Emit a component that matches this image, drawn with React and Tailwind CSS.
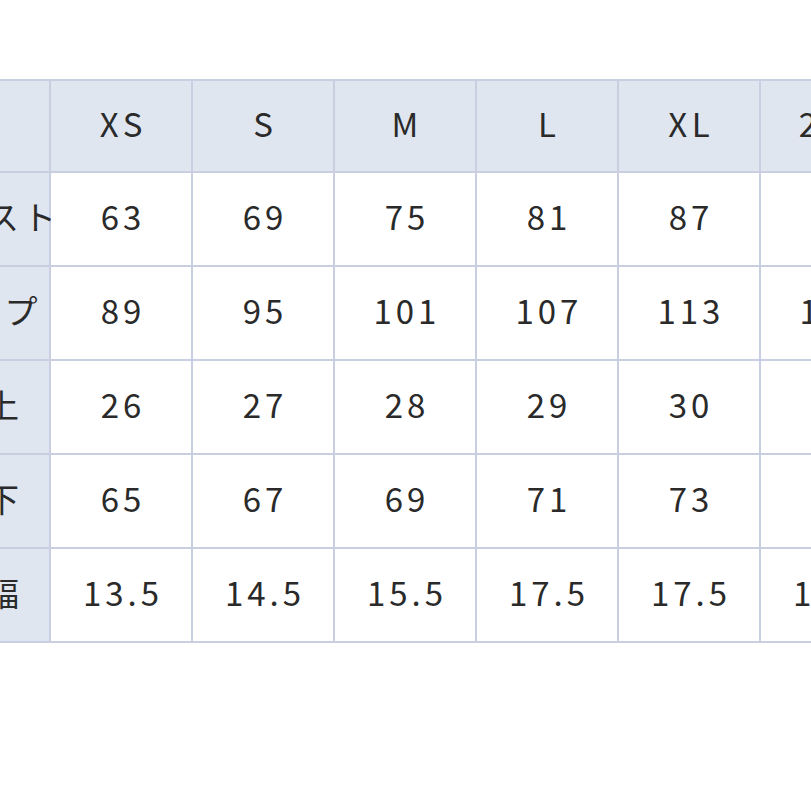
import React from "react";

const headers = ["", "XS", "S", "M", "L", "XL", "2XL"];
const rows = [
  ["ウエスト", "63", "69", "75", "81", "87", "93"],
  ["ヒップ", "89", "95", "101", "107", "113", "119"],
  ["股上", "26", "27", "28", "29", "30", "31"],
  ["股下", "65", "67", "69", "71", "73", "75"],
  ["裾幅", "13.5", "14.5", "15.5", "17.5", "17.5", "18.5"],
];

export default function App() {
  return (
    <div
      className="w-[811px] h-[811px] overflow-hidden bg-white"
      style={{ fontFamily: '"Noto Sans CJK JP", "Noto Sans", sans-serif' }}
    >
      <div className="mt-[79px] ml-[-71px] inline-grid grid-cols-[118px_repeat(6,140px)] grid-rows-[90px_repeat(5,92px)] gap-[2px] p-[2px] bg-[#c9cee0] w-max">
        {headers.map((h, i) => (
          <div
            key={"h" + i}
            className="bg-[#dfe6f0] flex items-center justify-center whitespace-nowrap pb-[4px] text-[33px] tracking-[0.14em] pl-[0.14em] text-[#2a2a2a]"
          >
            {h}
          </div>
        ))}
        {rows.map((r, ri) =>
          r.map((c, ci) => (
            <div
              key={ri + "-" + ci}
              className={
                (ci === 0 ? "bg-[#dfe6f0] pr-[12px] overflow-visible " : "bg-white ") +
                "flex items-center justify-center whitespace-nowrap pb-[4px] text-[33px] tracking-[0.12em] pl-[0.12em] text-[#2a2a2a]"
              }
            >
              {c}
            </div>
          ))
        )}
      </div>
    </div>
  );
}
